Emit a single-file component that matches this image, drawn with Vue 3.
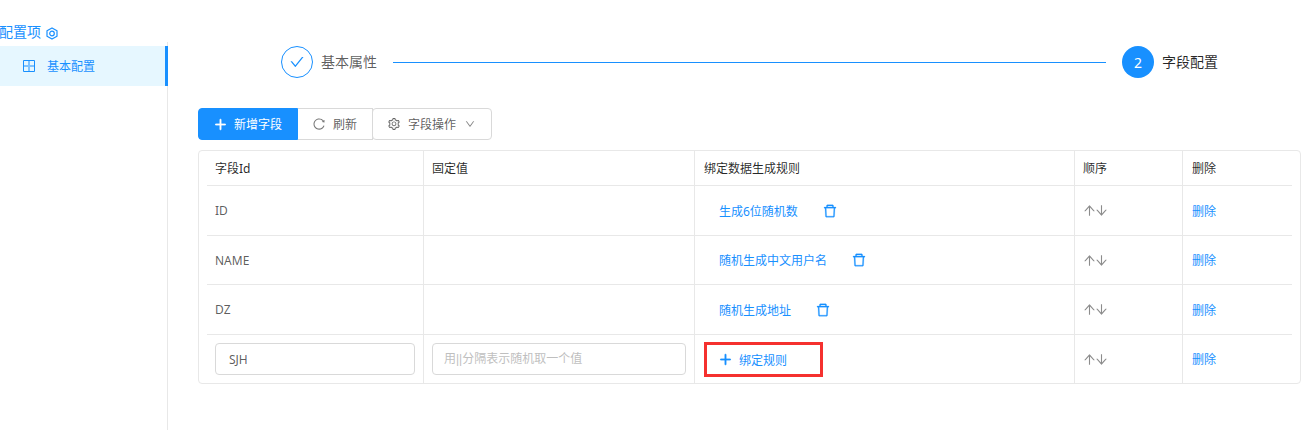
<script setup>
const icons = {
  plus: 'M482 152h60q8 0 8 8v704q0 8-8 8h-60q-8 0-8-8V160q0-8 8-8zM176 474h672q8 0 8 8v60q0 8-8 8H176q-8 0-8-8v-60q0-8 8-8z',
  check: 'M912 190h-69.9c-9.8 0-19.1 4.5-25.1 12.2L404.7 724.5 207 474a32 32 0 0 0-25.1-12.2H112c-6.7 0-10.4 7.7-6.3 12.9l273.9 347c12.8 16.2 37.4 16.2 50.3 0l488.4-618.9c4.1-5.1.4-12.8-6.3-12.8z',
  reload: 'M909.1 209.3l-56.4 44.1C775.8 155.1 656.2 92 521.9 92 290 92 102.3 279.5 102 511.5 101.7 743.7 289.8 932 521.9 932c181.3 0 335.8-115 394.6-276.1 1.5-4.2-.7-8.9-4.9-10.3l-56.7-19.5a8 8 0 0 0-10.1 4.8c-1.8 5-3.8 10-5.9 14.9-17.3 41-42.1 77.8-73.7 109.4A344.77 344.77 0 0 1 655.9 829c-42.3 17.9-87.4 27-133.8 27-46.5 0-91.5-9.1-133.8-27A341.5 341.5 0 0 1 279 755.2a342.16 342.16 0 0 1-73.7-109.4c-17.9-42.4-27-87.4-27-133.9s9.1-91.5 27-133.9c17.3-41 42.1-77.8 73.7-109.4 31.6-31.6 68.4-56.4 109.3-73.8 42.3-17.9 87.4-27 133.8-27 46.5 0 91.5 9.1 133.8 27a341.5 341.5 0 0 1 109.3 73.8c9.9 9.9 19.2 20.4 27.8 31.4l-60.2 47a8 8 0 0 0 3 14.1l175.6 43c5 1.2 9.9-2.6 9.9-7.7l.8-180.9c-.1-6.6-7.8-10.3-13-6.2z',
  setting: 'M924.8 625.7l-65.5-56c3.1-19 4.7-38.4 4.7-57.8s-1.6-38.8-4.7-57.8l65.5-56a32.03 32.03 0 0 0 9.3-35.2l-.9-2.6a443.74 443.74 0 0 0-79.7-137.9l-1.8-2.1a32.12 32.12 0 0 0-35.1-9.5l-81.3 28.9c-30-24.6-63.5-44-99.7-57.6l-15.7-85a32.05 32.05 0 0 0-25.8-25.7l-2.7-.5c-52.1-9.4-106.9-9.4-159 0l-2.7.5a32.05 32.05 0 0 0-25.8 25.7l-15.8 85.4a351.86 351.86 0 0 0-99 57.4l-81.9-29.1a32 32 0 0 0-35.1 9.5l-1.8 2.1a446.02 446.02 0 0 0-79.7 137.9l-.9 2.6c-4.5 12.5-.8 26.5 9.3 35.2l66.3 56.6c-3.1 18.8-4.6 38-4.6 57.1 0 19.2 1.5 38.4 4.6 57.1L99 625.5a32.03 32.03 0 0 0-9.3 35.2l.9 2.6c18.1 50.4 44.9 96.9 79.7 137.9l1.8 2.1a32.12 32.12 0 0 0 35.1 9.5l81.9-29.1c29.8 24.5 63.1 43.9 99 57.4l15.8 85.4a32.05 32.05 0 0 0 25.8 25.7l2.7.5a449.4 449.4 0 0 0 159 0l2.7-.5a32.05 32.05 0 0 0 25.8-25.7l15.7-85a350 350 0 0 0 99.7-57.6l81.3 28.9a32 32 0 0 0 35.1-9.5l1.8-2.1c34.8-41.1 61.6-87.5 79.7-137.9l.9-2.6c4.5-12.3.8-26.3-9.3-35zM788.3 465.9c2.5 15.1 3.8 30.6 3.8 46.1s-1.3 31-3.8 46.1l-6.6 40.1 74.7 63.9a370.03 370.03 0 0 1-42.6 73.6L721 702.8l-31.4 25.8c-23.9 19.6-50.5 35-79.3 45.8l-38.1 14.3-17.9 97a377.5 377.5 0 0 1-85 0l-17.9-97.2-37.8-14.5c-28.5-10.8-55-26.2-78.7-45.7l-31.4-25.9-93.4 33.2c-17-22.9-31.2-47.6-42.6-73.6l75.5-64.5-6.5-40c-2.4-14.9-3.7-30.3-3.7-45.5 0-15.3 1.2-30.6 3.7-45.5l6.5-40-75.5-64.5c11.3-26.1 25.6-50.7 42.6-73.6l93.4 33.2 31.4-25.9c23.7-19.5 50.2-34.9 78.7-45.7l37.9-14.3 17.9-97.2c28.1-3.2 56.8-3.2 85 0l17.9 97 38.1 14.3c28.7 10.8 55.4 26.2 79.3 45.8l31.4 25.8 92.8-32.9c17 22.9 31.2 47.6 42.6 73.6L781.8 426l6.5 39.9zM512 326c-97.2 0-176 78.8-176 176s78.8 176 176 176 176-78.8 176-176-78.8-176-176-176zm79.2 255.2A111.6 111.6 0 0 1 512 614c-29.9 0-58-11.7-79.2-32.8A111.6 111.6 0 0 1 400 502c0-29.9 11.7-58 32.8-79.2C454 401.6 482.1 390 512 390c29.9 0 58 11.6 79.2 32.8A111.6 111.6 0 0 1 624 502c0 29.9-11.7 58-32.8 79.2z',
  down: 'M884 256h-75c-5.1 0-9.9 2.5-12.9 6.6L512 654.2 227.9 262.6c-3-4.1-7.8-6.6-12.9-6.6h-75c-6.5 0-10.3 7.4-6.5 12.7l352.6 486.1c12.8 17.6 39 17.6 51.7 0l352.6-486.1c3.9-5.3.1-12.7-6.4-12.7z',
  up: 'M868 545.5L536.1 163a31.96 31.96 0 0 0-48.3 0L156 545.5a7.97 7.97 0 0 0 6 13.2h81c4.6 0 9-2 12.1-5.5L474 300.9V864c0 4.4 3.6 8 8 8h60c4.4 0 8-3.6 8-8V300.9l218.9 252.3c3 3.5 7.4 5.5 12.1 5.5h81c6.8 0 10.5-8 6-13.2z',
  dn: 'M862 465.3h-81c-4.6 0-9 2-12.1 5.5L550 723.1V160c0-4.4-3.6-8-8-8h-60c-4.4 0-8 3.6-8 8v563.1L255.1 470.8c-3-3.5-7.4-5.5-12.1-5.5h-81c-6.8 0-10.5 8.1-6 13.2L487.9 861a31.96 31.96 0 0 0 48.3 0L868 478.5c4.5-5.2.8-13.2-6-13.2z',
  trash: 'M360 184h-8c4.4 0 8-3.6 8-8v8h304v-8c0 4.4 3.6 8 8 8h-8v72h72v-80c0-35.3-28.7-64-64-64H352c-35.3 0-64 28.7-64 64v80h72v-72zm504 72H160c-17.7 0-32 14.3-32 32v32c0 4.4 3.6 8 8 8h60.4l24.7 523c1.6 34.1 29.8 61 63.9 61h454c34.2 0 62.3-26.8 63.9-61l24.7-523H888c4.4 0 8-3.6 8-8v-32c0-17.7-14.3-32-32-32zM731.3 840H292.7l-24.2-512h487l-24.2 512z'
}
const rows = [
  { id: 'ID', rule: '生成6位随机数', h: 'h50' },
  { id: 'NAME', rule: '随机生成中文用户名', h: 'h49' },
  { id: 'DZ', rule: '随机生成地址', h: 'h50' }
]
</script>

<template>
  <div class="page">
    <aside class="side">
      <div class="side-title">
        <span class="side-title-text">配置项</span>
        <svg class="hex" viewBox="0 0 12 13" width="12" height="13">
          <path d="M6 .9l5 2.9v5.4l-5 2.9-5-2.9V3.8z" fill="none" stroke="#1890ff" stroke-width="1.2" stroke-linejoin="round" />
          <circle cx="6" cy="6.5" r="2.3" fill="none" stroke="#1890ff" stroke-width="1.2" />
        </svg>
      </div>
      <div class="menu">
        <div class="menu-item">
          <svg class="grid-ic" viewBox="0 0 12 12" width="12" height="12">
            <path d="M6 1v10M1 6h10" fill="none" stroke="#1890ff" stroke-opacity=".5" stroke-width="2" />
            <path d="M.5.5h11v11H.5z" fill="none" stroke="#1890ff" stroke-width="1" />
          </svg>
          <span>基本配置</span>
        </div>
      </div>
    </aside>

    <main class="main">
      <div class="steps">
        <div class="step">
          <span class="dot done">
            <svg class="ic" viewBox="64 64 896 896" width="14" height="14"><path :d="icons.check" /></svg>
          </span>
          <span class="step-label muted">基本属性</span>
        </div>
        <div class="step-line"></div>
        <div class="step">
          <span class="dot now">2</span>
          <span class="step-label">字段配置</span>
        </div>
      </div>

      <div class="toolbar">
        <button class="btn primary" type="button">
          <svg class="ic bold" viewBox="64 64 896 896" width="13" height="13"><path :d="icons.plus" /></svg>
          <span>新增字段</span>
        </button>
        <button class="btn refresh" type="button">
          <svg class="ic" viewBox="64 64 896 896" width="12" height="12"><path :d="icons.reload" /></svg>
          <span>刷新</span>
        </button>
        <button class="btn ops" type="button">
          <svg class="ic" viewBox="64 64 896 896" width="12" height="12"><path :d="icons.setting" /></svg>
          <span>字段操作</span>
          <svg class="ic chevron" viewBox="64 64 896 896" width="10" height="10"><path :d="icons.down" /></svg>
        </button>
      </div>

      <div class="table">
        <div class="row head">
          <div class="cell c1">字段Id</div>
          <div class="cell c2">固定值</div>
          <div class="cell c3">绑定数据生成规则</div>
          <div class="cell c4">顺序</div>
          <div class="cell c5">删除</div>
        </div>
        <div v-for="r in rows" :key="r.id" class="row" :class="r.h">
          <div class="cell c1">{{ r.id }}</div>
          <div class="cell c2"></div>
          <div class="cell c3">
            <span class="rule">{{ r.rule }}</span>
            <svg class="ic trash" viewBox="64 64 896 896" width="14" height="14"><path :d="icons.trash" /></svg>
          </div>
          <div class="cell c4 arrows">
            <svg class="ic" viewBox="64 64 896 896" width="13" height="13"><path :d="icons.up" /></svg>
            <svg class="ic" viewBox="64 64 896 896" width="13" height="13"><path :d="icons.dn" /></svg>
          </div>
          <div class="cell c5"><a class="link">删除</a></div>
        </div>
        <div class="row h48 last">
          <div class="cell c1"><input class="input" value="SJH" /></div>
          <div class="cell c2"><input class="input ph" placeholder="用||分隔表示随机取一个值" /></div>
          <div class="cell c3">
            <div class="bind">
              <svg class="ic bold" viewBox="64 64 896 896" width="13" height="13"><path :d="icons.plus" /></svg>
              <span>绑定规则</span>
            </div>
          </div>
          <div class="cell c4 arrows">
            <svg class="ic" viewBox="64 64 896 896" width="13" height="13"><path :d="icons.up" /></svg>
            <svg class="ic" viewBox="64 64 896 896" width="13" height="13"><path :d="icons.dn" /></svg>
          </div>
          <div class="cell c5"><a class="link">删除</a></div>
        </div>
      </div>
    </main>
  </div>
</template>

<style scoped>
.page {
  display: flex;
  width: 1314px;
  height: 430px;
  overflow: hidden;
  background: #fff;
  font-family: "Noto Sans", "Noto Sans CJK SC", sans-serif;
  font-size: 12px;
  color: rgba(0, 0, 0, 0.65);
}
.ic { fill: currentColor; display: block; flex: none; }
.bold { stroke: currentColor; stroke-width: 50; }

.side { width: 168px; flex: none; display: flex; flex-direction: column; }
.side-title {
  height: 42px;
  padding-top: 22px;
  box-sizing: border-box;
  display: flex;
  align-items: center;
  gap: 5px;
  color: #1890ff;
  font-size: 14px;
  line-height: 20px;
}
.side-title-text { margin-left: -1px; }
.hex { margin-top: 3px; }
.menu { flex: 1; padding-top: 4px; border-right: 1px solid #e8e8e8; }
.menu-item {
  height: 40px;
  margin-right: -1px;
  padding-left: 23px;
  display: flex;
  align-items: center;
  gap: 12px;
  background: #e6f7ff;
  border-right: 3px solid #1890ff;
  color: #1890ff;
}

.main { flex: 1; padding: 46px 0 0 30px; }
.steps { display: flex; align-items: center; width: 937px; margin-left: 83px; height: 32px; }
.step { display: flex; align-items: center; gap: 8px; }
.dot {
  width: 32px; height: 32px; border-radius: 50%; box-sizing: border-box;
  display: flex; align-items: center; justify-content: center; font-size: 14px;
}
.dot.done { border: 1px solid #1890ff; color: #1890ff; }
.dot.now { background: #1890ff; color: #fff; }
.step-label { font-size: 14px; line-height: 22px; color: rgba(0, 0, 0, 0.85); }
.step-label.muted { color: rgba(0, 0, 0, 0.65); }
.step-line { flex: 1; height: 1px; background: #1890ff; margin: 0 16px; }

.toolbar { display: flex; margin-top: 30px; height: 32px; }
.btn {
  height: 32px; box-sizing: border-box; padding: 0; margin: 0;
  display: flex; align-items: center; background: #fff;
  border: 1px solid #d9d9d9; font: inherit; color: rgba(0, 0, 0, 0.65);
}
.primary {
  width: 100px; padding-left: 15px; gap: 7px; background: #1890ff; border-color: #1890ff;
  color: #fff; border-radius: 4px 0 0 4px;
}
.refresh { width: 75px; padding-left: 15px; gap: 8px; border-left: 0; }
.refresh .ic { color: #777; }
.ops { width: 120px; margin-left: -1px; padding-left: 15px; gap: 8px; border-radius: 4px; }
.ops .ic { color: #666; }
.ops .chevron { margin-left: 1px; color: #888; }

.table {
  margin-top: 10px; width: 1103px; box-sizing: border-box;
  padding: 0 8px; border: 1px solid #e8e8e8; border-radius: 4px;
}
.row {
  display: grid;
  grid-template-columns: 216px 271px 380px 108px 110px;
  box-sizing: border-box;
  border-bottom: 1px solid #e8e8e8;
}
.row.last { border-bottom: 0; }
.head { height: 35px; color: rgba(0, 0, 0, 0.85); }
.h50 { height: 50px; }
.h49 { height: 49px; }
.h48 { height: 48px; }
.cell {
  display: flex; align-items: center; box-sizing: border-box;
  padding-left: 8px; border-left: 1px solid #e8e8e8; min-width: 0;
}
.c1 { border-left: 0; padding-right: 8px; }
.c2 { padding-right: 8px; }
.c3 { padding-left: 8px; }
.head .c3 { padding-left: 9px; }
.c5 { padding-left: 9px; }
.rule { margin-left: 16px; color: #1890ff; margin-right: 25px; }
.trash { color: #1890ff; stroke: currentColor; stroke-width: 16; }
.arrows { color: #8c8c8c; }
.arrows .ic:first-child { margin-right: -1px; }
.link { color: #1890ff; }

.input {
  width: 100%; height: 32px; box-sizing: border-box; padding: 0 13px;
  border: 1px solid #d9d9d9; border-radius: 4px; outline: 0;
  font: inherit; color: rgba(0, 0, 0, 0.65); background: #fff;
}
.input.ph { padding: 0 11px; font-family: "Liberation Sans", "Noto Sans CJK SC", sans-serif; }
.input::placeholder { color: #bfbfbf; opacity: 1; }

.bind {
  width: 119px; height: 35px; box-sizing: border-box; margin: 1px 0 0 1px;
  border: 3px solid #f5312f; padding-left: 12px;
  display: flex; align-items: center; gap: 7px; color: #1890ff;
}
</style>
